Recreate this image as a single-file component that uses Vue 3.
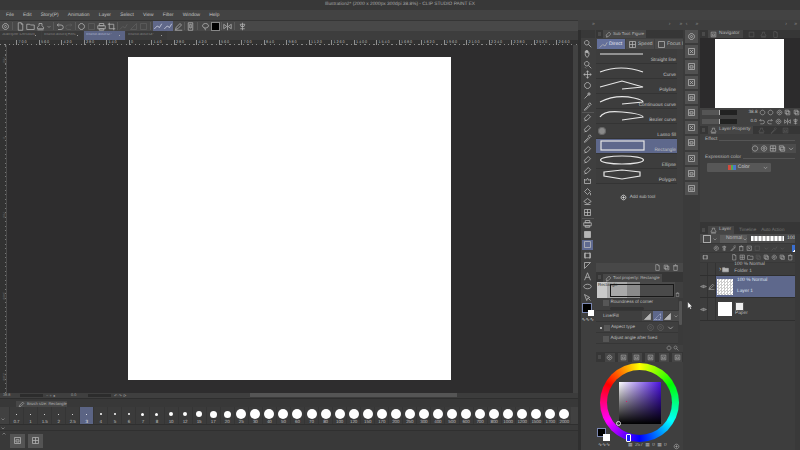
<script setup>
const menus = ['File','Edit','Story(P)','Animation','Layer','Select','View','Filter','Window','Help']
const P = {
  gear:'M6 2a4 4 0 1 0 .01 0M6 4.5a1.5 1.5 0 1 0 .01 0',
  doc:'M3 1h4l2 2v8H3zM7 1v2h2',
  folder:'M1 3h4l1 1h5v6H1z',
  stamp:'M4 2h4v3l2 2v2H2V7l2-2zM2 10.5h8',
  chev:'M3 5l3 3 3-3',
  undo:'M3 4h5a3 3 0 0 1 0 6H4M3 4l2-2M3 4l2 2',
  redo:'M9 4H4a3 3 0 0 0 0 6h4M9 4L7 2M9 4L7 6',
  circ:'M6 2a4 4 0 1 0 .01 0',
  print:'M3 2h6v3H3zM1 5h10v4H1zM3 9h6v2H3z',
  crop:'M3 1v8h8M1 3h8v8',
  sq:'M2 2h8v8H2z',
  tri:'M2 10L10 2v8z',
  line1:'M1 10L5 6 8 8 11 3',
  pencil:'M2 10l1-3 5-5 2 2-5 5zM1 11h10',
  tablet:'M3 1h6v10H3zM5 3h2v5H5z',
  lasso:'M6 2a4 3 0 1 0 .01 0M5 8l1 3',
  flip:'M1 3v6l4-3zM11 3v6L7 6zM6 1v10',
  pin:'M6 1v10M3 3h6L8 6H4zM3 9h6',
  mag:'M5 2a3 3 0 1 0 .01 0M7 7l4 4',
  hand:'M3 6V3h1v2V2h1v3V2h1v3V3h1v3l1-1v3l-2 3H5L3 8z',
  zoomr:'M5 2a3 3 0 1 0 .01 0M7 7l4 4M3 10l1 1',
  move:'M6 1v10M1 6h10M6 1L4.5 3M6 1l1.500 2M6 11l-1.500-2M6 11l1.500-2M1 6l2-1.500M1 6l2 1.500M11 6L9 4.500M11 6L9 7.500',
  wand:'M2 10l5-5M8 2l.5 1.500L10 4l-1.500.5L8 6l-.5-1.500L6 4l1.500-.5z',
  drop:'M2 10l5-5 1 1-5 5H2zM7 3l2-2 2 2-2 2z',
  pen:'M3 10L2 7l5-5 3 3-5 5zM2 11l2-2',
  fill:'M2 6l4-4 4 4-4 4zM10 8v3',
  crown:'M2 10V4l2 2 2-3 2 3 2-2v6z',
  grid:'M2 2h8v8H2zM6 2v8M2 6h8',
  bucket:'M1 6l5-4 5 4-5 3zM2 10h8',
  grad:'M2 2h8v8H2z',
  frame:'M2 3h8v6H2zM3 2v8M9 2v8',
  corner:'M2 2h8L2 10z',
  A:'M2 11L6 1l4 10M3.500 7h5',
  oval:'M6 3a5 3 0 1 0 .01 0',
  arrow:'M2 2l3 8 1-3 3-1zM7 7l3 3',
  folder2:'M2 2h8v8H2zM4 5h4v3H4z',
  x:'M2 2h8v8H2zM4 4l4 4M8 4l-4 4',
  eye:'M1 6q5-4 10 0-5 4-10 0M6 5a1 1 0 1 0 .01 0',
  plus:'M6 2a4 4 0 1 0 .01 0M6 4v4M4 6h4',
  trash:'M3 3h6v8H3zM2 3h8M5 1h2',
  copy:'M2 2h6v6H2zM4 4h6v6H4z',
  layers:'M6 2l5 3-5 3-5-3zM1 8l5 3 5-3'
}
const toolbar = [
  {d:P.gear},{s:2},{d:P.doc},{d:P.folder},{d:P.stamp},{d:P.chev,small:1},{s:1},{d:P.undo},{d:P.redo,dim:1},{s:1},
  {d:P.circ},{d:P.sq,dim:1},{d:P.print},{d:P.crop},{s:1},{d:P.line1,dim:1},{d:P.tri,dim:1},{d:P.sq,dim:1},{s:2},
  {d:P.line1,on:1},{d:P.line1,on:1},{d:P.pencil},{s:1},{d:P.tablet},{s:2},{d:P.lasso},{black:1},{s:1},{d:P.flip},{s:2},{d:P.pin}
]
const tabs = [
  {t:'Sample Default',w:36},{t:'Illustration(Rec',w:36},{t:'Illustration2*',w:41,on:1},{t:'Illustration3*',w:40}
]
const rulerH = ['700','560','420','280','140','0','140','280','420','560','700','840','980','1120','1260','1400','1540','1680','1820','1960','2100','2240','2380','2520','2660']
const sizes = [0.7,1,1.5,2,2.5,3,4,5,6,7,8,10,12,15,17,20,25,30,40,50,60,70,80,100,120,150,170,200,250,300,400,500,600,700,800,1000,1200,1500,1700,2000]
const brush = sizes.map(v => {
  const dot = v < 4 ? 1 : v < 7 ? 2 : v < 10 ? 3 : v < 13 ? 4 : v < 16 ? 6 : v < 21 ? 7 : 10
  return { v, dot }
})
const tools = [
  {d:P.mag},{d:P.hand},{d:P.zoomr},{d:P.move},{d:P.circ,dim:1},{d:P.wand},{d:P.drop},{s:1},
  {d:P.pen},{d:P.pen},{d:P.drop},{d:P.pen},{d:P.pen},{d:P.pen},{d:P.crown},{d:P.fill},{d:P.bucket},{d:P.grid},{s:1},
  {d:P.print},{d:P.grad,solid:1},{d:P.sq,on:1},{d:P.frame},{d:P.corner},{d:P.A},{d:P.oval},{d:P.arrow}
]
const subs = ['Straight line','Curve','Polyline','Continuous curve','Bezier curve','Lasso fill','Rectangle','Ellipse','Polygon']
const side = [P.gear,P.x,P.folder2,P.x,P.folder2,P.folder2,P.x,P.folder2,P.x,P.folder2,P.folder2]
const navIcons = [[P.circ,P.circ,P.gear,P.copy,P.copy],[P.undo,P.redo,P.gear,P.flip,P.pin]]
</script>

<template>
  <div class="app">
    <div class="title">Illustration2* (2000 x 2000px 300dpi 38.8%)  - CLIP STUDIO PAINT EX</div>
    <div class="menu"><span v-for="m in menus" :key="m">{{ m }}</span></div>
    <div class="body">
      <div class="left">
        <div class="toolbar">
          <template v-for="(b, i) in toolbar" :key="i">
            <i v-if="b.s" class="tsep" :class="{ wide: b.s === 2 }"></i>
            <b v-else-if="b.black" class="tblack"></b>
            <svg v-else viewBox="0 0 12 12" class="tic" :class="{ dim: b.dim, on: b.on, small: b.small }"><path :d="b.d" /></svg>
          </template>
        </div>
        <div class="tabs">
          <div v-for="t in tabs" :key="t.t" class="tab" :class="{ on: t.on }">
            <span>{{ t.t }}</span><em></em>
          </div>
        </div>
        <div class="ruler-h">
          <span v-for="(r, i) in rulerH" :key="i">{{ r }}</span>
        </div>
        <div class="mid">
          <div class="ruler-v"><span>700</span><span>0</span><span>700</span><span>1400</span><span>2100</span></div>
          <div class="canvas"><div class="paper"></div></div>
          <div class="vscroll"><i></i></div>
        </div>
        <div class="status">
          <div class="st-left">
            <span class="st-a">38.8</span><i class="st-sl"></i><span class="st-dots">− + ●</span>
            <span class="st-b">0.0</span><i class="st-sl"></i><span class="st-dots">↶ ↷ ⟳</span>
          </div>
          <div class="hscroll"><i></i></div>
        </div>
        <div class="brush">
          <div class="b-tabrow">
            <div class="b-tab">
              <svg viewBox="0 0 12 12" class="tic"><path :d="P.pencil" /></svg>
              <span>Brush size: Rectangle</span>
            </div>
          </div>
          <div class="b-cells">
            <div class="b-chev"><svg viewBox="0 0 12 12" class="tic"><path :d="P.chev" /></svg></div>
            <div v-for="c in brush" :key="c.v" class="cell" :class="{ on: c.v === 3 }">
              <div class="dotbox"><i class="dot" :style="{ width: c.dot + 'px', height: c.dot + 'px' }"></i></div>
              <span>{{ c.v }}</span>
            </div>
          </div>
          <div class="b-row"><svg viewBox="0 0 12 12" class="tic"><path :d="P.chev" /></svg></div>
          <div class="b-btns">
            <svg viewBox="0 0 12 12" class="tic up"><path :d="P.chev" /></svg>
            <div class="bbtn"><svg viewBox="0 0 12 12" class="tic"><path :d="P.folder2" /></svg></div>
            <div class="bbtn"><svg viewBox="0 0 12 12" class="tic"><path :d="P.grid" /></svg></div>
          </div>
        </div>
      </div>

      <div class="right">
        <div class="strip"><span>»</span><span>›</span><span>»</span><span>‹</span><span>»</span><span>›</span><span>»</span></div>
        <div class="docks">
          <div class="toolcol">
            <div class="toolhead"></div>
            <template v-for="(t, i) in tools" :key="i">
              <i v-if="t.s" class="csep"></i>
              <div v-else class="tool" :class="{ on: t.on }">
                <svg viewBox="0 0 12 12" class="tic" :class="{ dim: t.dim, solid: t.solid }"><path :d="t.d" /></svg>
              </div>
            </template>
            <div class="swatch"><i class="s-b"></i><i class="s-w"></i></div>
            <div class="wave">∿∿∿</div>
          </div>

          <div class="subcol">
            <div class="ptab">
              <i class="grip"></i>
              <div class="ptab-on"><svg viewBox="0 0 12 12" class="tic"><path :d="P.pen" /></svg><span>Sub Tool: Figure</span></div>
            </div>
            <div class="groups">
              <div class="grp on"><svg viewBox="0 0 12 12" class="tic"><path :d="P.line1" /></svg><span>Direct</span></div>
              <div class="grp"><svg viewBox="0 0 12 12" class="tic"><path :d="P.grid" /></svg><span>Speed</span></div>
              <div class="grp"><svg viewBox="0 0 12 12" class="tic"><path :d="P.sq" /></svg><span>Focus l</span></div>
            </div>
            <div class="rows">
              <div v-for="(s, i) in subs" :key="s" class="row" :class="{ on: i === 6 }">
                <svg viewBox="0 0 81 15" class="shape">
                  <path v-if="i === 0" d="M4 5H47" />
                  <path v-if="i === 1" d="M4 8Q25 0 47 8" />
                  <path v-if="i === 2" d="M4 8L26 2 47 8 26 10" />
                  <path v-if="i === 3" d="M4 8Q20 0 38 4 47 6 47 8L26 10" />
                  <path v-if="i === 4" d="M4 8Q8 1 26 3 47 5 47 8L26 11" />
                  <g v-if="i === 5" class="lasso"><ellipse cx="6" cy="7" rx="3.500" ry="3.500" /></g>
                  <rect v-if="i === 6" x="5" y="2" width="43" height="9" />
                  <ellipse v-if="i === 7" cx="26" cy="6" rx="21.500" ry="4" />
                  <path v-if="i === 8" d="M8 3L26 1 44 3V7L26 10 8 7Z" />
                </svg>
                <span>{{ s }}</span>
              </div>
            </div>
            <div class="addbox">
              <div class="add"><svg viewBox="0 0 12 12" class="tic"><path :d="P.plus" /></svg><span>Add sub tool</span></div>
            </div>
            <div class="pbar">
              <svg viewBox="0 0 12 12" class="tic"><path :d="P.doc" /></svg>
              <svg viewBox="0 0 12 12" class="tic"><path :d="P.copy" /></svg>
              <svg viewBox="0 0 12 12" class="tic"><path :d="P.trash" /></svg>
            </div>
            <div class="ptab tall">
              <i class="grip"></i>
              <div class="ptab-on"><svg viewBox="0 0 12 12" class="tic"><path :d="P.pen" /></svg><span>Tool property: Rectangle</span></div>
            </div>
            <div class="preview">
              <div class="pv-band">
                <div class="pv-light"><span>Rectangle</span></div>
                <div class="pv-rect"></div>
              </div>
              <svg viewBox="0 0 12 12" class="tic"><path :d="P.trash" /></svg>
            </div>
            <div class="props">
              <div class="plist">
                <div class="prop p-round">
                  <i class="chk"></i><span>Roundness of corner</span>
                  <i class="slider"></i>
                </div>
                <div class="prop p-fill">
                  <span class="lf">Line/Fill</span>
                  <div class="segs">
                    <b class="seg"><svg viewBox="0 0 12 12" class="tic solid"><path :d="P.tri" /></svg></b>
                    <b class="seg on"><svg viewBox="0 0 12 12" class="tic"><path :d="P.tri" /></svg></b>
                    <b class="seg"><svg viewBox="0 0 12 12" class="tic solid"><path :d="P.tri" /></svg></b>
                    <svg viewBox="0 0 12 12" class="tic"><path :d="P.chev" /></svg>
                  </div>
                </div>
                <div class="prop p-aspect">
                  <i class="bullet"></i><i class="chk"></i><span>Aspect type</span>
                  <div class="p-ics">
                    <svg viewBox="0 0 12 12" class="tic dim"><path :d="P.gear" /></svg>
                    <svg viewBox="0 0 12 12" class="tic dim"><path :d="P.gear" /></svg>
                    <svg viewBox="0 0 12 12" class="tic"><path :d="P.chev" /></svg>
                  </div>
                </div>
                <div class="prop p-adj"><i class="chk"></i><span>Adjust angle after fixed</span></div>
              </div>
              <div class="pscroll"><i></i></div>
            </div>
            <div class="pfoot">
              <svg viewBox="0 0 12 12" class="tic"><path :d="P.circ" /></svg>
              <svg viewBox="0 0 12 12" class="tic"><path :d="P.mag" /></svg>
            </div>
            <div class="ctabs">
              <i class="grip"></i>
              <b class="ctab on"><svg viewBox="0 0 12 12" class="tic"><path :d="P.gear" /></svg></b>
              <b v-for="n in 5" :key="n" class="ctab"><svg viewBox="0 0 12 12" class="tic"><path :d="P.folder2" /></svg></b>
            </div>
            <div class="wheelbox">
              <div class="wheel">
                <div class="hole"><div class="sv"><i class="sv-pick"></i></div></div>
                <i class="svring"></i>
                <i class="huemark"></i>
              </div>
              <i class="w-b"></i><i class="w-w"></i>
            </div>
            <div class="cfoot">
              <span class="cwave">∿∿∿</span>
              <span class="cnums">▦ 257 ▦ 0 ▦ 0</span>
              <svg viewBox="0 0 12 12" class="tic"><path :d="P.plus" /></svg>
            </div>
          </div>

          <div class="iconcol">
            <div v-for="(d, i) in side" :key="i" class="sbtn"><svg viewBox="0 0 12 12" class="tic"><path :d="d" /></svg></div>
          </div>

          <div class="rcol">
            <div class="rtab">
              <i class="grip"></i>
              <div class="rtab-on"><svg viewBox="0 0 12 12" class="tic"><path :d="P.folder2" /></svg><span>Navigator</span></div>
              <svg viewBox="0 0 12 12" class="tic dim"><path :d="P.sq" /></svg>
              <svg viewBox="0 0 12 12" class="tic dim"><path :d="P.stamp" /></svg>
              <svg viewBox="0 0 12 12" class="tic dim"><path :d="P.doc" /></svg>
            </div>
            <div class="navview"><div class="navpaper"></div></div>
            <div class="navctl">
              <div class="nrow" v-for="(ics, r) in navIcons" :key="r">
                <i class="nslider" :class="{ ns2: r === 1 }"></i>
                <span>{{ r === 0 ? '38.8' : '0.0' }}</span>
                <svg v-for="(d, k) in ics" :key="k" viewBox="0 0 12 12" class="tic"><path :d="d" /></svg>
              </div>
            </div>
            <div class="rtab">
              <i class="grip"></i>
              <div class="rtab-on"><svg viewBox="0 0 12 12" class="tic"><path :d="P.stamp" /></svg><span>Layer Property</span></div>
              <svg viewBox="0 0 12 12" class="tic dim"><path :d="P.stamp" /></svg>
              <svg viewBox="0 0 12 12" class="tic dim"><path :d="P.drop" /></svg>
              <svg viewBox="0 0 12 12" class="tic dim"><path :d="P.folder2" /></svg>
            </div>
            <div class="lprop">
              <div class="legend"><span>Effect</span><i></i></div>
              <div class="fx">
                <svg viewBox="0 0 12 12" class="tic"><path :d="P.circ" /></svg>
                <svg viewBox="0 0 12 12" class="tic"><path :d="P.gear" /></svg>
                <svg viewBox="0 0 12 12" class="tic"><path :d="P.grid" /></svg>
                <svg viewBox="0 0 12 12" class="tic"><path :d="P.copy" /></svg>
                <svg viewBox="0 0 12 12" class="tic"><path :d="P.chev" /></svg>
              </div>
              <div class="legend l2"><span>Expression color</span><i></i></div>
              <div class="dropd">
                <span class="tricolor"><i class="r"></i><i class="g"></i><i class="bl"></i></span>
                <span>Color</span>
                <svg viewBox="0 0 12 12" class="tic"><path :d="P.chev" /></svg>
              </div>
            </div>
            <div class="rgap"></div>
            <div class="rtab">
              <i class="grip"></i>
              <div class="rtab-on"><svg viewBox="0 0 12 12" class="tic"><path :d="P.stamp" /></svg><span>Layer</span></div>
              <span class="offtab">Timeline</span>
              <span class="offtab">Auto Action</span>
            </div>
            <div class="layerwrap">
              <div class="layerpanel">
                <div class="lbar">
                  <i class="lsq"></i>
                  <svg viewBox="0 0 12 12" class="tic"><path :d="P.chev" /></svg>
                  <div class="blend"><span>Normal</span><svg viewBox="0 0 12 12" class="tic"><path :d="P.chev" /></svg></div>
                  <i class="opac"></i><span class="pct">100</span>
                </div>
                <div class="lbar l-ic">
                  <svg viewBox="0 0 12 12" class="tic"><path :d="P.gear" /></svg>
                  <svg viewBox="0 0 12 12" class="tic"><path :d="P.pin" /></svg>
                  <svg viewBox="0 0 12 12" class="tic"><path :d="P.drop" /></svg>
                  <svg viewBox="0 0 12 12" class="tic"><path :d="P.trash" /></svg>
                  <svg viewBox="0 0 12 12" class="tic"><path :d="P.x" /></svg>
                  <svg viewBox="0 0 12 12" class="tic dim"><path :d="P.sq" /></svg>
                  <svg viewBox="0 0 12 12" class="tic dim"><path :d="P.chev" /></svg>
                  <svg viewBox="0 0 12 12" class="tic dim"><path :d="P.line1" /></svg>
                  <svg viewBox="0 0 12 12" class="tic dim"><path :d="P.chev" /></svg>
                  <i class="lcolor"></i>
                </div>
                <div class="lbar l-ic2">
                  <svg viewBox="0 0 12 12" class="tic first"><path :d="P.frame" /></svg>
                  <svg viewBox="0 0 12 12" class="tic"><path :d="P.doc" /></svg>
                  <svg viewBox="0 0 12 12" class="tic"><path :d="P.grid" /></svg>
                  <svg viewBox="0 0 12 12" class="tic"><path :d="P.folder" /></svg>
                  <svg viewBox="0 0 12 12" class="tic dim"><path :d="P.copy" /></svg>
                  <svg viewBox="0 0 12 12" class="tic"><path :d="P.copy" /></svg>
                  <svg viewBox="0 0 12 12" class="tic"><path :d="P.gear" /></svg>
                  <svg viewBox="0 0 12 12" class="tic"><path :d="P.copy" /></svg>
                  <svg viewBox="0 0 12 12" class="tic"><path :d="P.trash" /></svg>
                </div>
                <div class="lrow folder">
                  <i class="c1"></i><i class="c2"></i>
                  <span class="arr">›</span>
                  <svg viewBox="0 0 12 12" class="tic solid"><path :d="P.folder" /></svg>
                  <div class="ltext"><span>100 % Normal</span><span>Folder 1</span></div>
                </div>
                <div class="lrow l1">
                  <i class="c1"><svg viewBox="0 0 12 12" class="tic"><path :d="P.eye" /></svg></i>
                  <i class="c2"><svg viewBox="0 0 12 12" class="tic"><path :d="P.pencil" /></svg></i>
                  <div class="sel">
                    <i class="thumb check"></i>
                    <div class="ltext"><span>100 % Normal</span><span>Layer 1</span></div>
                  </div>
                </div>
                <div class="lrow l2r">
                  <i class="c1"><svg viewBox="0 0 12 12" class="tic"><path :d="P.eye" /></svg></i>
                  <i class="c2"></i>
                  <i class="thumb white"></i>
                  <div class="ltext paper-t"><i class="mini"></i><span>Paper</span></div>
                </div>
              </div>
              <div class="lscroll"></div>
            </div>
          </div>
        </div>
      </div>
    </div>
    <svg class="cursor" viewBox="0 0 8 12"><path d="M1 1v9l2-2 1.500 3 1.500-.7L4.500 7.500H7z" /></svg>
  </div>
</template>

<style>
html, body { margin: 0; background: #3a3a3a; }
</style>

<style scoped>
.app { position: relative; width: 800px; height: 450px; overflow: hidden; background: #3b3b3b; color: #bdbdbd; font: 5.5px/1 "Liberation Sans", Arial, sans-serif; text-rendering: geometricPrecision; display: flex; flex-direction: column; }
.tic { width: 9px; height: 9px; flex: none; fill: none; stroke: #b5b5b5; stroke-width: 1; }
.tic.dim { stroke: #5f5f5f; }
.tic.solid { fill: #b5b5b5; }
.title { height: 10px; background: #383838; text-align: center; color: #a8a8a8; line-height: 10px; font-size: 4.800px; white-space: pre; }
.menu { height: 10px; background: #434343; display: flex; gap: 9.200px; padding: 2px 0 0 6px; box-sizing: border-box; color: #c4c4c4; font-size: 4.900px; line-height: 8px; }
.body { flex: 1; display: flex; min-height: 0; }
.left { width: 578px; flex: none; display: flex; flex-direction: column; }
.toolbar { height: 11px; background: #484848; display: flex; align-items: center; gap: 1px; padding-left: .5px; border-top: 1px solid #353535; box-sizing: border-box; }
.tic.on { background: #60688a; stroke: #d8dcea; height: 10px; padding: 0 .5px; margin: 0 -.5px; box-sizing: content-box; }
.tic.small { width: 6px; }
.tsep { width: 1px; height: 8px; background: #5a5a5a; flex: none; }
.tsep.wide { margin: 0 1.500px; }
.tblack { width: 7px; height: 7px; background: #000; border: 1px solid #888; flex: none; }
.tabs { height: 9px; background: #3d3d3d; display: flex; gap: 1px; }
.tab { display: flex; align-items: center; justify-content: space-between; height: 9px; padding: 0 5px 0 2px; width: 41px; box-sizing: border-box; color: #7d7d7d; font-size: 4.800px; background: #3a3a3a; }
.tab span { overflow: hidden; white-space: nowrap; }
.tab em { width: 1.500px; height: 1.500px; border-radius: 50%; background: #bbb; flex: none; }
.tab.on { background: #5b6484; color: #a6adc4; }
.ruler-h { height: 5px; background: #323232; display: flex; padding-left: 16px; overflow: hidden; background-image: repeating-linear-gradient(90deg, #8a8a8a 0 1px, transparent 1px 4.500px); background-size: 100% 1.500px; background-repeat: no-repeat; background-position: 0 100%; }
.ruler-h span { width: 22.500px; flex: none; box-sizing: border-box; font-size: 3.800px; line-height: 4px; letter-spacing: .9px; color: #b5b5b5; border-left: 1px solid #909090; padding-left: 1.500px; white-space: nowrap; }
.mid { flex: 1; display: flex; min-height: 0; }
.ruler-v { width: 7px; flex: none; background: #323232; border-right: 1px solid #4a4a4a; box-sizing: border-box; display: flex; flex-direction: row; justify-content: space-between; align-items: center; padding: 12px 0; color: #777; font-size: 3.500px; writing-mode: vertical-rl; background-image: repeating-linear-gradient(0deg, #777 0 1px, transparent 1px 4.500px); background-size: 1.500px 100%; background-repeat: no-repeat; background-position: 100% 0; }
.canvas { flex: 1; background: #2e2d2e; display: flex; align-items: center; justify-content: center; padding: 0 2px 2px 0; }
.paper { width: 323px; height: 323px; flex: none; background: #fff; }
.vscroll { width: 5px; flex: none; background: #353535; }
.vscroll i { display: block; height: 100%; background: #424242; }
.status { height: 5px; background: #3f3f3f; display: flex; align-items: center; font-size: 3.800px; color: #999; white-space: nowrap; }
.st-left { width: 250px; flex: none; display: flex; align-items: center; }
.st-a { width: 20px; padding-left: 3px; box-sizing: border-box; flex: none; }
.st-b { width: 17px; margin-left: 7px; flex: none; }
.st-sl { width: 23px; height: 3px; background: #2c2c2c; flex: none; margin-right: 3px; }
.st-dots { font-size: 4px; width: 18px; flex: none; overflow: hidden; }
.hscroll { flex: 1; height: 5px; background: #3c3c3c; }
.hscroll i { display: block; width: 207px; height: 4px; background: #555; }
.brush { height: 52px; background: #3a3a3a; border-top: 1px solid #2e2e2e; box-sizing: border-box; display: flex; flex-direction: column; }
.b-tabrow { height: 8px; padding: 2px 0 0 16px; background: #383838; box-sizing: border-box; flex: none; }
.b-tab { width: 51px; height: 6px; background: #474747; display: flex; align-items: center; gap: 2px; padding-left: 2px; box-sizing: border-box; font-size: 4.100px; color: #b0b0b0; white-space: nowrap; }
.b-tab .tic { width: 7px; height: 7px; }
.b-cells { height: 18px; flex: none; box-sizing: border-box; display: flex; background: #414141; border-bottom: 1px solid #2f2f2f; }
.b-chev { width: 9px; flex: none; display: flex; align-items: flex-end; padding-bottom: 2px; box-sizing: border-box; }
.b-chev .tic, .b-row .tic, .up { width: 6px; height: 6px; }
.cell { position: relative; width: 14.050px; flex: none; border-left: 1px solid #353535; box-sizing: border-box; display: flex; flex-direction: column; align-items: center; background: #3b3b3b; font-size: 4.500px; color: #bcbcbc; }
.cell.on { background: #5b6484; color: #e3e6f0; }
.dotbox { height: 14px; display: flex; align-items: center; justify-content: center; }
.dot { display: block; background: #fff; border-radius: 50%; flex: none; }
.cell span { position: absolute; bottom: 0; left: 0; right: 0; text-align: center; white-space: nowrap; letter-spacing: -.1px; }
.b-row { height: 6px; flex: none; box-sizing: border-box; background: #3a3a3a; border-bottom: 1px solid #303030; }
.b-btns { flex: 1; display: flex; align-items: center; gap: 3px; padding-left: 1px; background: #393939; }
.up { transform: rotate(180deg); align-self: flex-start; }
.bbtn { width: 15px; height: 14px; background: #545454; display: flex; align-items: center; justify-content: center; }
.right { flex: 1; display: flex; flex-direction: column; min-width: 0; }
.strip { height: 10px; background: #3f3f3f; display: flex; padding: 2px 0 0 14px; box-sizing: border-box; color: #8a8a8a; font-size: 5px; }
.strip span:nth-child(2) { margin-left: 74px; }
.strip span:nth-child(3) { margin-left: 9px; }
.strip span:nth-child(4) { margin-left: 3.500px; }
.strip span:nth-child(5) { margin-left: 8px; }
.strip span:nth-child(6) { margin-left: 87px; }
.strip span:nth-child(7) { margin-left: 7.500px; }
.docks { flex: 1; display: flex; min-height: 0; }
.toolcol { width: 18px; flex: none; background: #3f3f3f; display: flex; flex-direction: column; align-items: flex-end; padding-right: 1px; box-sizing: border-box; border-left: 3px solid #2f2f2f; }
.toolhead { height: 8px; flex: none; width: 100%; background: #383838; }
.tool { width: 11px; height: 10.500px; display: flex; align-items: center; justify-content: center; flex: none; margin-right: 2px; }
.tool.on { background: #5f6a90; }
.tool .tic { stroke: #bdbdbd; }
.csep { height: 1px; width: 12px; background: #555; flex: none; margin-right: 1px; }
.swatch { position: relative; width: 13px; height: 15px; margin: 0 1px 0 0; flex: none; }
.s-b { position: absolute; left: 1px; top: 0; width: 8px; height: 8px; background: #000; border: 1px solid #7a86b0; }
.s-w { position: absolute; left: 7px; top: 7px; width: 6px; height: 6px; background: #fff; }
.wave { color: #ddd; font-size: 5px; margin-right: 1px; line-height: 5px; }
.subcol { width: 87px; flex: none; background: #3f3f3f; display: flex; flex-direction: column; }
.ptab { height: 8px; flex: none; background: #363636; display: flex; align-items: flex-end; padding-left: 2px; gap: 2px; box-sizing: border-box; }
.ptab.tall { height: 10px; }
.grip { width: 3px; height: 4px; background: #4a4a4a; flex: none; align-self: center; }
.ptab-on { height: 8px; background: #474747; display: flex; align-items: center; gap: 1px; padding: 0 2px; font-size: 4.300px; color: #b8b8b8; white-space: nowrap; }
.ptab-on .tic { width: 7px; height: 7px; }
.groups { height: 11px; flex: none; display: flex; gap: 1px; padding: 1px 0 0 1px; box-sizing: border-box; background: #404040; }
.grp { flex: 1; display: flex; align-items: center; gap: 1px; padding-left: 2px; background: #4a4a4a; font-size: 5px; color: #bdbdbd; white-space: nowrap; overflow: hidden; }
.grp.on { background: #64709a; color: #e6e8f2; }
.rows { height: 135px; flex: none; padding-right: 6px; background: #3f3f3f; }
.row { position: relative; height: 15px; box-sizing: border-box; border-bottom: 1px solid #343434; background: #3d3d3d; }
.row.on { background: #5e688c; }
.row span { position: absolute; right: 1px; bottom: -1px; font-size: 4.800px; color: #c2c2c2; white-space: nowrap; }
.shape { display: block; width: 81px; height: 15px; fill: none; stroke: #e6e6e6; stroke-width: 1.200; }
.lasso ellipse { fill: #8a8a8a; stroke: #666; }
.addbox { height: 79px; flex: none; display: flex; justify-content: center; padding-top: 9px; box-sizing: border-box; padding-right: 4px; }
.add { display: flex; align-items: center; gap: 3px; height: 9px; font-size: 4.600px; color: #c0c0c0; }
.add .tic { stroke: #ddd; width: 7px; height: 7px; stroke-width: 1.500; }
.pbar { height: 9px; flex: none; background: #484848; display: flex; justify-content: flex-end; align-items: center; gap: 2px; padding-right: 4px; }
.pbar .tic { width: 7px; height: 7px; }
.preview { height: 16px; flex: none; display: flex; align-items: flex-end; background: #3f3f3f; padding-left: 1px; }
.preview .tic { width: 5px; height: 5px; margin-bottom: 1px; }
.pv-band { position: relative; flex: none; width: 78px; height: 16px; display: flex; background: #4a4a4a; }
.pv-light { width: 43px; background: linear-gradient(90deg, #c9c9c9 0 10px, #a9a9a9 10px 30px, #8a8a8a 30px); color: #2e2e2e; font-size: 4.400px; padding-left: 1px; box-sizing: border-box; line-height: 6px; }
.pv-rect { position: absolute; left: 13px; top: 2px; right: 1px; bottom: 1px; border: 1px solid #181818; }
.props { height: 47px; flex: none; display: flex; }
.plist { flex: 1; min-width: 0; }
.prop { position: relative; height: 11px; display: flex; align-items: center; gap: 1.500px; padding-left: 7px; font-size: 4.600px; color: #bfbfbf; border-bottom: 1px solid #363636; box-sizing: border-box; white-space: nowrap; }
.p-round { height: 13px; padding-bottom: 3px; }
.p-aspect, .p-adj { padding-top: 1px; }
.slider { position: absolute; left: 14px; top: 9px; width: 34px; height: 3px; background: #333; border-radius: 2px; }
.chk { width: 6px; height: 6px; background: #565656; flex: none; }
.lf { width: 37px; flex: none; }
.segs { display: flex; align-items: center; background: #4a4a4a; height: 10px; padding-left: 1px; }
.seg { width: 10px; height: 10px; display: flex; align-items: center; justify-content: center; }
.seg.on { background: #5e688c; }
.seg.on .tic { stroke-dasharray: 1 1; stroke: #cdd3ea; }
.segs > .tic { width: 6px; height: 6px; }
.bullet { width: 2px; height: 2px; background: #ddd; border-radius: 50%; margin-left: -3px; }
.p-ics { display: flex; margin-left: auto; gap: 1px; padding-right: 3px; }
.pscroll { width: 5px; flex: none; padding: 3px 1px; box-sizing: border-box; background: #3a3a3a; }
.pscroll i { display: block; height: 24px; background: #555; border-radius: 1px; }
.pfoot { height: 7px; flex: none; display: flex; justify-content: flex-end; gap: 1px; padding-right: 4px; }
.pfoot .tic { width: 6px; height: 6px; }
.ctabs { height: 10px; flex: none; display: flex; align-items: center; background: #363636; gap: 3.500px; padding-left: 2px; }
.ctab { width: 10px; height: 9px; background: #464646; display: flex; align-items: center; justify-content: center; }
.ctab .tic { width: 7px; height: 7px; }
.wheelbox { position: relative; height: 81px; flex: none; display: flex; justify-content: center; padding-top: 1px; box-sizing: border-box; background: #3f3f3f; }
.wheel { position: relative; width: 79px; height: 79px; border-radius: 50%; background: conic-gradient(#ff0, #0f0, #0ff, #00f, #f0f, #f00, #ff0); display: flex; align-items: center; justify-content: center; }
.hole { width: 65px; height: 65px; border-radius: 50%; background: #3f3f3f; display: flex; align-items: center; justify-content: center; }
.sv { position: relative; width: 42px; height: 42px; background: linear-gradient(180deg, transparent, #000), linear-gradient(90deg, #fff, #4a10e0); }
.sv-pick { position: absolute; left: 7px; top: 19px; width: 1px; height: 1px; background: #d81b60; }
.svring { position: absolute; left: 16px; top: 58px; width: 3px; height: 3px; border: .8px solid #ddd; border-radius: 50%; }
.huemark { position: absolute; left: 26px; top: 71px; width: 3px; height: 6px; background: #1b1bff; border: .8px solid #fff; border-radius: 1px; }
.w-b { position: absolute; left: 1px; top: 66px; width: 7px; height: 7px; background: #000; border: 1px solid #7a86b0; }
.w-w { position: absolute; left: 7px; top: 72px; width: 7px; height: 7px; background: #fff; }
.cfoot { flex: 1; display: flex; align-items: center; padding: 0 2px; gap: 4px; font-size: 4.800px; color: #aaa; }
.cwave { color: #ddd; margin-right: 14px; }
.cnums { word-spacing: 1px; margin-right: 2px; white-space: nowrap; }
.cfoot .tic { width: 7px; height: 7px; }
.iconcol { width: 15px; flex: none; margin-left: 1px; background: #3b3b3b; display: flex; flex-direction: column; align-items: center; gap: 2px; }
.sbtn { width: 13px; height: 13.200px; flex: none; background: #515151; display: flex; align-items: center; justify-content: center; }
.rcol { width: 100px; flex: none; margin-left: 1px; display: flex; flex-direction: column; background: #3f3f3f; }
.rtab { height: 8px; flex: none; background: #363636; display: flex; align-items: center; gap: 3px; padding-left: 2px; box-sizing: border-box; }
.rtab > .tic { width: 7px; height: 7px; margin-left: 2px; }
.rtab-on { display: flex; align-items: center; gap: 2px; height: 8px; padding: 0 3px 0 2px; background: #454545; font-size: 4.800px; color: #b8b8b8; white-space: nowrap; }
.rtab-on .tic { width: 7px; height: 7px; }
.offtab { color: #777; font-size: 4.600px; white-space: nowrap; margin-left: 2px; }
.navview { height: 70px; flex: none; background: #2c2b2c; display: flex; justify-content: center; padding-right: 1px; }
.navpaper { width: 69px; height: 69px; background: #fff; margin-top: 1px; }
.navctl { height: 18px; flex: none; background: #414141; display: flex; flex-direction: column; justify-content: center; gap: 2px; padding: 0 1px 0 2px; }
.nrow { display: flex; align-items: center; gap: 1.500px; font-size: 4.600px; color: #bbb; }
.nrow .tic { width: 7px; height: 7px; }
.nslider { width: 35px; height: 5px; background: linear-gradient(90deg, #555 0 48%, #aaa 48% 52%, #222 52%); margin-right: 10px; flex: none; }
.ns2 { margin-right: 12px; }
.lprop { height: 88px; flex: none; padding: 0 5px; box-sizing: border-box; background: #3f3f3f; }
.legend { display: flex; align-items: center; gap: 2px; font-size: 4.900px; color: #b8b8b8; height: 8px; margin-top: 2px; white-space: nowrap; }
.legend i { flex: 1; height: 1px; background: #555; }
.l2 { margin-top: 1px; }
.fx { display: flex; justify-content: flex-end; gap: 1px; height: 9px; margin: 0 -1px 0 47px; background: #4c4c4c; padding: 0 1px; }
.fx .tic { width: 8px; height: 9px; }
.dropd { width: 64px; height: 9px; margin: 1px 0 0 2px; background: #575757; border-radius: 1px; display: flex; align-items: center; justify-content: center; gap: 2px; font-size: 5px; color: #ccc; position: relative; }
.dropd .tic { position: absolute; right: 2px; width: 7px; height: 7px; }
.tricolor { display: flex; }
.tricolor i { width: 2.500px; height: 5px; display: block; }
.r { background: #d14b3d; }
.g { background: #55a84f; }
.bl { background: #4a77c9; }
.rgap { height: 4px; flex: none; background: #363636; }
.layerwrap { flex: 1; display: flex; min-height: 0; }
.layerpanel { flex: 1; min-width: 0; background: #3d3d3d; }
.lscroll { width: 5px; background: #393939; }
.lbar { height: 10px; background: #4a4a4a; display: flex; align-items: center; gap: 1px; padding-left: 1px; border-bottom: 1px solid #383838; box-sizing: border-box; }
.lsq { width: 6px; height: 6px; border: 1px solid #aaa; flex: none; margin-left: 2px; }
.lbar > .tic { width: 6px; height: 6px; }
.blend { width: 27px; height: 8px; background: #5a5a5a; display: flex; align-items: center; justify-content: space-between; padding-left: 6px; box-sizing: border-box; font-size: 5px; color: #bbb; margin-left: 1px; }
.blend .tic { width: 6px; height: 6px; }
.opac { width: 33px; height: 5px; margin-left: 3px; background: repeating-linear-gradient(90deg, #fff 0 2px, #bbb 2px 4px); flex: none; }
.pct { font-size: 5px; margin-left: 2px; color: #ccc; }
.l-ic { height: 9px; padding-left: 13px; gap: 1.800px; background: #3f3f3f; }
.l-ic .tic { width: 6.500px; height: 6.500px; }
.lcolor { width: 7px; height: 7px; background: linear-gradient(135deg, #3b6fd0 50%, #fff 50%); margin-left: 4px; flex: none; }
.l-ic2 { padding-left: 2px; gap: 1.500px; background: #3f3f3f; }
.l-ic2 .tic { width: 6.500px; height: 6.500px; }
.l-ic2 .first { margin-right: 21px; }
.lrow { display: flex; align-items: center; border-bottom: 1px solid #2f2f2f; box-sizing: border-box; font-size: 4.800px; color: #bcbcbc; }
.c1, .c2 { width: 8px; align-self: stretch; border-right: 1px solid #333; box-sizing: border-box; flex: none; display: flex; align-items: center; justify-content: center; }
.c1 .tic, .c2 .tic { width: 7px; height: 7px; }
.folder { height: 13px; }
.arr { margin: 0 1px 0 3px; font-size: 7px; }
.folder .tic { width: 7px; height: 7px; margin-right: 5px; }
.ltext { display: flex; flex-direction: column; gap: 2px; white-space: nowrap; }
.l1 { height: 22px; }
.sel { flex: 1; align-self: stretch; background: #5e688c; display: flex; align-items: center; gap: 4px; padding-left: 1px; color: #dfe2ee; }
.sel .ltext { gap: 6px; }
.thumb { width: 16px; height: 16px; display: block; flex: none; }
.check { background: conic-gradient(#ccc 25%, #fff 25% 50%, #ccc 50% 75%, #fff 75%); background-size: 3px 3px; }
.white { background: #fff; margin-left: 2px; width: 14px; height: 14px; margin-right: 3px; }
.l2r { height: 23px; }
.paper-t { gap: 1px; }
.mini { width: 7px; height: 7px; background: #eee; border: 1px solid #555; display: block; }
.cursor { position: absolute; left: 687px; top: 301px; width: 6px; height: 9px; fill: #fff; stroke: #222; stroke-width: .5; }
</style>
